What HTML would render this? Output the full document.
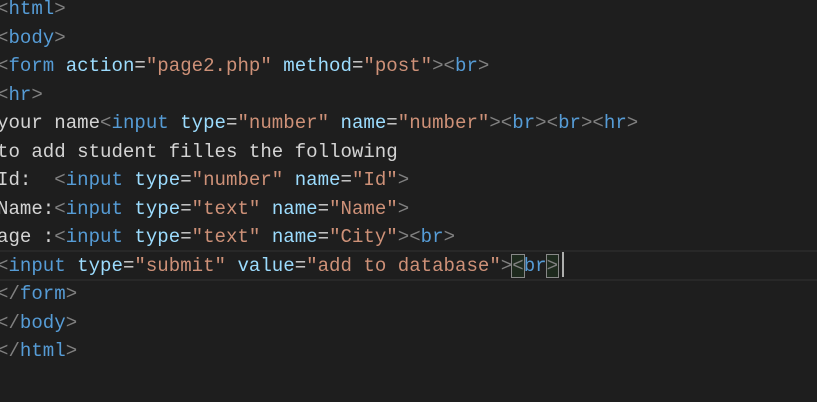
<!DOCTYPE html>
<html><head><meta charset="utf-8"><style>
html,body{margin:0;padding:0;background:#1e1e1e;width:817px;height:402px;overflow:hidden}
pre{margin:0;position:absolute;left:-3px;top:-5px;font-family:"Liberation Mono",monospace;font-size:19.08px;line-height:28.5px;color:#d4d4d4}
.b{color:#808080}.t{color:#569cd6}.a{color:#9cdcfe}.s{color:#ce9178}
.cur{position:absolute;left:0;top:250px;width:817px;height:27px;border-top:2px solid #282828;border-bottom:2px solid #282828}
.m{outline:1px solid #888;background:#1e2a1e}
.caret{position:absolute;left:562px;top:252px;width:2px;height:25px;background:#aeafad}
</style></head><body>
<div class="cur"></div>
<pre><span class="b">&lt;</span><span class="t">html</span><span class="b">&gt;</span>
<span class="b">&lt;</span><span class="t">body</span><span class="b">&gt;</span>
<span class="b">&lt;</span><span class="t">form</span> <span class="a">action</span>=<span class="s">"page2.php"</span> <span class="a">method</span>=<span class="s">"post"</span><span class="b">&gt;&lt;</span><span class="t">br</span><span class="b">&gt;</span>
<span class="b">&lt;</span><span class="t">hr</span><span class="b">&gt;</span>
your name<span class="b">&lt;</span><span class="t">input</span> <span class="a">type</span>=<span class="s">"number"</span> <span class="a">name</span>=<span class="s">"number"</span><span class="b">&gt;&lt;</span><span class="t">br</span><span class="b">&gt;&lt;</span><span class="t">br</span><span class="b">&gt;&lt;</span><span class="t">hr</span><span class="b">&gt;</span>
to add student filles the following
Id:  <span class="b">&lt;</span><span class="t">input</span> <span class="a">type</span>=<span class="s">"number"</span> <span class="a">name</span>=<span class="s">"Id"</span><span class="b">&gt;</span>
Name:<span class="b">&lt;</span><span class="t">input</span> <span class="a">type</span>=<span class="s">"text"</span> <span class="a">name</span>=<span class="s">"Name"</span><span class="b">&gt;</span>
age :<span class="b">&lt;</span><span class="t">input</span> <span class="a">type</span>=<span class="s">"text"</span> <span class="a">name</span>=<span class="s">"City"</span><span class="b">&gt;&lt;</span><span class="t">br</span><span class="b">&gt;</span>
<span class="b">&lt;</span><span class="t">input</span> <span class="a">type</span>=<span class="s">"submit"</span> <span class="a">value</span>=<span class="s">"add to database"</span><span class="b">&gt;</span><span class="b m">&lt;</span><span class="t">br</span><span class="b m">&gt;</span>
<span class="b">&lt;/</span><span class="t">form</span><span class="b">&gt;</span>
<span class="b">&lt;/</span><span class="t">body</span><span class="b">&gt;</span>
<span class="b">&lt;/</span><span class="t">html</span><span class="b">&gt;</span></pre>
<div class="caret"></div>
</body></html>
